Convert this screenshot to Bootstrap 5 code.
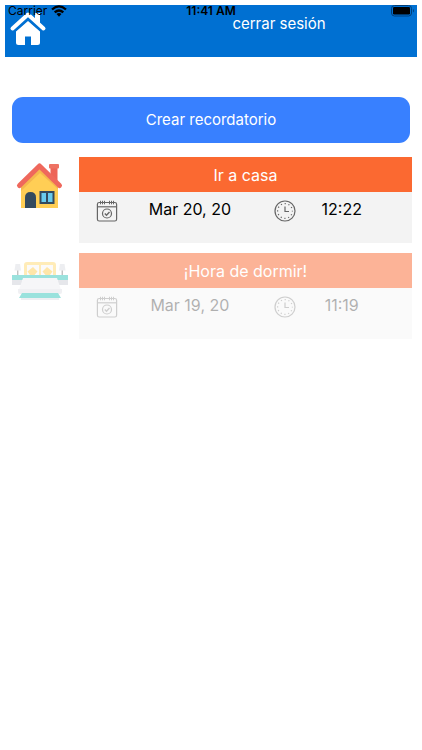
<!DOCTYPE html>
<html lang="es">
<head>
<meta charset="utf-8">
<meta name="viewport" content="width=device-width, initial-scale=1">
<title>Recordatorios</title>
<link href="https://cdn.jsdelivr.net/npm/bootstrap@5.3.0/dist/css/bootstrap.min.css" rel="stylesheet">
<style>
body { font-family: Inter, "Liberation Sans", sans-serif; font-size: 16px; line-height: 24px; color: #000; background: #fff; padding: 5px; }
svg { display: block; flex: none; }
.phone-status { position: absolute; top: 2px; left: 0; right: 0; height: 18px; padding: 0 8px; font-size: 12px; line-height: 18px; pointer-events: none; }
.phone-status > * { flex: 1 1 0; }
.topbar { background: #0070d2; height: 52px; }
.home-link { padding: 4px 0 0 4px; }
.logout-area { width: 67%; padding-top: 6px; }
.logout { color: #fff; font-size: 15px; }
.create-btn { background: #3880ff; color: #fff; border: 0; border-radius: 11px; height: 46px; font-size: 15px; }
.create-btn:hover { background: #2f74ee; color: #fff; }
.create-wrap { padding: 40px 7px 14px; }
.reminders { padding: 0 5px 0 7px; gap: 10px; }
.reminder { gap: 11px; }
.reminder-title { background: #fb6931; color: #fff; font-size: 16px; line-height: 24px; padding: 6px 0 5px; font-weight: 400; }
.reminder-panel { background: #f3f3f3; }
.reminder-info { display: grid; grid-template-columns: 36fr 130fr 60fr 54fr; justify-items: center; align-items: start; padding: 5px 13% 0 3%; height: 51px; }
.reminder-info svg { margin-top: 3px; }
.done { opacity: .5; }
.done .reminder-info { opacity: .6; }
.done .reminder-panel { background: #f6f6f6; }
</style>
<script src="https://cdn.jsdelivr.net/npm/bootstrap@5.3.0/dist/js/bootstrap.bundle.min.js"></script>
</head>
<body>
<svg width="0" height="0" class="position-absolute" aria-hidden="true">
  <symbol id="calendar" viewBox="0 0 22 22">
    <g fill="none" stroke="#666" stroke-width="1.200">
      <rect x="1.400" y="2.500" width="19.200" height="18.500" rx="1.800"/>
      <path d="M1.500 6.800H20.500"/>
      <path d="M4.500 .8V4.300M6.500 .8V4.300M8.500 .8V4.300M13.500 .8V4.300M15.500 .8V4.300M17.500 .8V4.300" stroke-width="1"/>
      <circle cx="11" cy="13.500" r="4.500"/>
      <path d="M8.800 13.500L10.500 15.200L13.500 12" stroke-width="1.400"/>
    </g>
  </symbol>
  <symbol id="clock" viewBox="0 0 22 22">
    <g fill="none" stroke="#666">
      <circle cx="11" cy="11" r="10" stroke-width="1.200"/>
      <path d="M11 6.500V11.500H15" stroke-width="1.200"/>
      <circle cx="11" cy="11" r="7.400" stroke-width="1.200" stroke-dasharray="1.200 2.674" stroke-dashoffset=".6"/>
    </g>
  </symbol>
</svg>

<header class="topbar d-flex justify-content-between">
  <a href="#" class="home-link" aria-label="Inicio">
    <svg width="38" height="38" viewBox="0 0 38 38" fill="#fff">
      <path d="M26 4H31V16L26 11Z"/>
      <path d="M19 12L31 22.500V33.500Q31 36 28.500 36H22V27.500H16V36H9.500Q7 36 7 33.500V22.500Z"/>
      <path d="M4.500 22.500L19 9.500L33.500 22.500" fill="none" stroke="#0070d2" stroke-width="2.500"/>
      <path d="M3.500 19.500L19 5.500L34.500 19.500" fill="none" stroke="#fff" stroke-width="4" stroke-linecap="round" stroke-linejoin="round"/>
    </svg></a>
  <div class="logout-area text-center">
    <a href="#" class="logout text-decoration-none">cerrar sesión</a>
  </div>
</header>

<div class="phone-status d-flex align-items-center">
  <div class="d-flex align-items-center gap-1"><span>Carrier</span>
    <svg width="16" height="12" viewBox="0 0 16 12"><g fill="none" stroke="#000" stroke-width="2.300"><path d="M1 4.500Q8 -1.800 15 4.500M3.700 7.400Q8 3.500 12.300 7.400"/></g><path d="M5.500 9Q8 7 10.500 9L8 11.700Z"/></svg>
  </div>
  <strong class="text-center fw-semibold">11:41 AM</strong>
  <div class="d-flex justify-content-end">
    <svg width="24" height="12" viewBox="0 0 24 12"><rect x="1.500" y=".5" width="20" height="10.500" rx="3" fill="none" stroke="#003e78"/><rect x="3" y="2" width="17" height="7.500" rx="1.200"/><path d="M23 4Q25 5.700 23 7.500Z" fill="#003e78"/></svg>
  </div>
</div>

<main>
  <div class="create-wrap"><button type="button" class="btn create-btn w-100">Crear recordatorio</button></div>
  <div class="reminders d-flex flex-column">
    <article class="reminder d-flex">
      <svg width="56" height="56" viewBox="0 0 56 56">
        <path d="M38.500 9H45.500V26L38.500 20Z" fill="#ed6458"/><rect x="37" y="7" width="10" height="4.500" rx="1" fill="#ee7263"/>
        <path d="M9 27L28 11L46 27V51H9Z" fill="#ffce55"/>
        <path d="M9 29L28 12L46 29V32L28 16L9 34Z" fill="#f5b84e"/>
        <path d="M7.500 28.500L27.500 9L47.500 28.500" fill="none" stroke="#ef685c" stroke-width="5" stroke-linecap="round" stroke-linejoin="round"/>
        <path d="M13 51V40.500Q13 35 18.500 35Q24 35 24 40.500V51Z" fill="#344a5e"/>
        <rect x="27.500" y="34" width="15" height="13" fill="#344a5e"/><path d="M29.500 36H34V45H29.500ZM36 36H40.500V45H36Z" fill="#69cbed"/>
      </svg>
      <div class="reminder-panel flex-fill">
        <h2 class="reminder-title text-center m-0">Ir a casa</h2>
        <div class="reminder-info">
          <svg width="22" height="22" role="img" aria-label="Fecha"><use href="#calendar"/></svg><span class="text-nowrap">Mar 20, 20</span>
          <svg width="22" height="22" role="img" aria-label="Hora"><use href="#clock"/></svg><span>12:22</span>
        </div>
      </div>
    </article>
    <article class="reminder done d-flex">
      <svg width="56" height="56" viewBox="0 0 56 56">
        <path d="M12 24V12Q12 9 15 9H41Q44 9 44 12V24Z" fill="#ffda73"/>
        <path d="M15 12H27V22H15ZM29 12H41V22H29Z" fill="#f8f7f7"/>
        <path d="M21 14L25.500 18.500L22.500 22H18L15.500 18.500ZM35 14L40.500 18.500L38 22H33.500L30.500 18.500Z" fill="#ffcf55"/>
        <path d="M3.500 11H8L9 17.500H2.500ZM48 11H52.500L53.500 17.500H47Z" fill="#dddfe4"/>
        <path d="M5.800 17.500V22M50.200 17.500V22" stroke="#555"/>
        <path d="M0 22H56V27H0Z" fill="#38c7bd"/><path d="M0 27H10V32H0ZM46 27H56V32H46Z" fill="#cfd0d8"/>
        <path d="M11 25H45L49 37H7Z" fill="#efeff2"/>
        <path d="M6 36H50V39Q50 41 48 41H8Q6 41 6 39Z" fill="#e2e3e8"/>
        <path d="M10 40H46L49 45H7Z" fill="#38c7bd"/>
        <path d="M9 45H47V47H9Z" fill="#dfe0e6"/>
      </svg>
      <div class="reminder-panel flex-fill">
        <h2 class="reminder-title text-center m-0">¡Hora de dormir!</h2>
        <div class="reminder-info">
          <svg width="22" height="22" role="img" aria-label="Fecha"><use href="#calendar"/></svg><span class="text-nowrap">Mar 19, 20</span>
          <svg width="22" height="22" role="img" aria-label="Hora"><use href="#clock"/></svg><span>11:19</span>
        </div>
      </div>
    </article>
  </div>
</main>
</body>
</html>
